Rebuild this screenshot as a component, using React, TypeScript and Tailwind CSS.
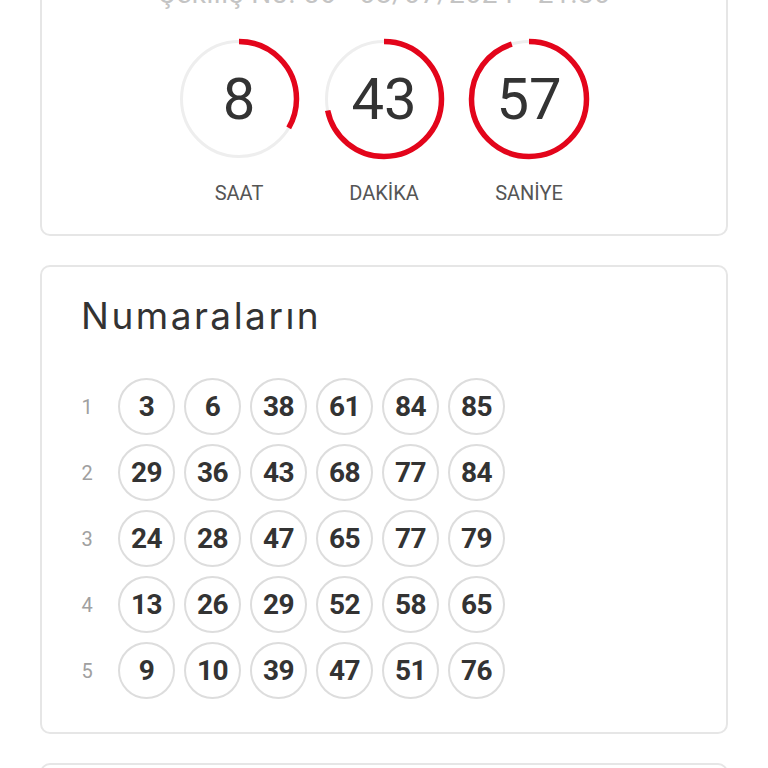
import React from 'react';

const rows: number[][] = [
  [3, 6, 38, 61, 84, 85],
  [29, 36, 43, 68, 77, 84],
  [24, 28, 47, 65, 77, 79],
  [13, 26, 29, 52, 58, 65],
  [9, 10, 39, 47, 51, 76],
];

function Ring({ value, max, label }: { value: number; max: number; label: string }) {
  const r = 57.5;
  const c = 2 * Math.PI * r;
  const part = (value / max) * c;
  return (
    <div className="flex flex-col items-center">
      <div className="relative w-[124px] h-[124px]">
        <svg width="124" height="124" viewBox="0 0 124 124" className="-rotate-90">
          <circle cx="62" cy="62" r={r} fill="none" stroke="#eeeeee" strokeWidth="3" />
          <circle
            cx="62"
            cy="62"
            r={r}
            fill="none"
            stroke="#e3051b"
            strokeWidth="5.5"
            strokeDasharray={`${part} ${c}`}
          />
        </svg>
        <div className="absolute inset-0 flex items-center justify-center text-[58px] text-[#333] leading-none">
          {value}
        </div>
      </div>
      <div className="mt-[20px] text-[20px] leading-[24px] text-[#555]">{label}</div>
    </div>
  );
}

export default function App() {
  return (
    <div
      className="bg-white min-h-[768px] h-[768px] overflow-hidden px-10 flex flex-col gap-[29px]"
      style={{ fontFamily: 'Roboto, "Liberation Sans", sans-serif' }}
    >
      <div className="-mt-[23px] border-2 border-[#e6e6e6] rounded-[10px] pb-[29px] flex flex-col items-center">
        <div className="text-[28px] leading-[30px] text-[#c4c4c4] tracking-[0.6px]">
          Çekiliş No: 56 - 08/07/2024 - 21:30
        </div>
        <div className="mt-[28px] flex gap-[21px]">
          <Ring value={8} max={24} label="SAAT" />
          <Ring value={43} max={60} label="DAKİKA" />
          <Ring value={57} max={60} label="SANİYE" />
        </div>
      </div>

      <div className="border-2 border-[#e6e6e6] rounded-[10px] pt-[27px] pb-[33px] px-[39px]">
        <h2
          className="text-[37px] leading-[44px] text-[#333] tracking-[2.5px]"
          style={{ fontFamily: 'Inter, "Noto Sans", sans-serif' }}
        >
          Numaraların
        </h2>
        <div className="mt-[40px] flex flex-col gap-[9px]">
          {rows.map((row, i) => (
            <div key={i} className="flex items-center">
              <div className="w-3 text-center text-[20px] text-[#a0a0a0]">{i + 1}</div>
              <div className="ml-[25px] flex gap-[9px]">
                {row.map((n, j) => (
                  <div
                    key={j}
                    className="w-[57px] h-[57px] rounded-full border-2 border-[#dddddd] flex items-center justify-center text-[28px] font-bold text-[#333] tracking-[-0.5px]"
                  >
                    {n}
                  </div>
                ))}
              </div>
            </div>
          ))}
        </div>
      </div>

      <div className="border-2 border-[#e6e6e6] rounded-[10px] h-[200px] shrink-0" />
    </div>
  );
}
